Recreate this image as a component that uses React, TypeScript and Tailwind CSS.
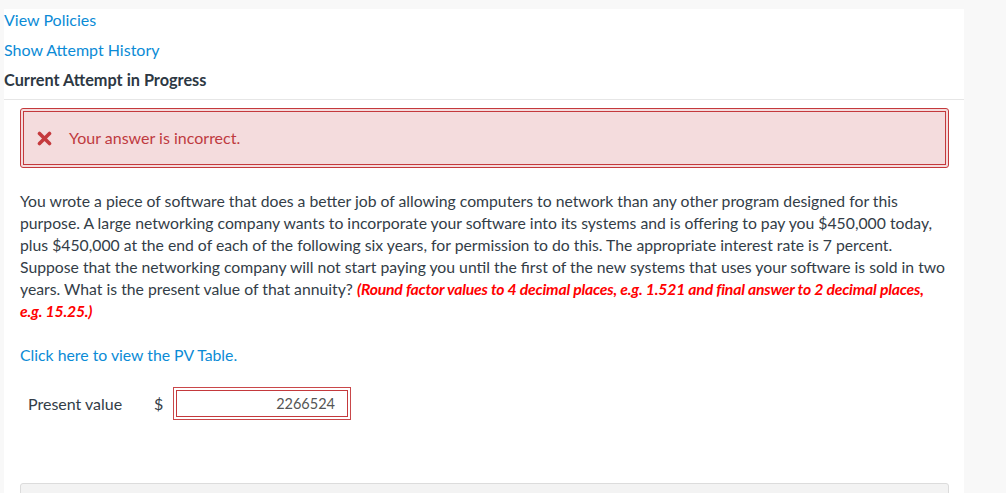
const font = { fontFamily: "Lato, 'Open Sans', sans-serif" };

function CrossIcon() {
  return (
    <svg width="15" height="15" viewBox="0 0 15 15" className="shrink-0">
      <path d="M2.5 2.5 L12.5 12.5 M12.5 2.5 L2.5 12.5" stroke="#c53a3d" strokeWidth="3.6" strokeLinecap="round" />
    </svg>
  );
}

export default function App() {
  return (
    <div className="min-h-screen bg-[#f8f8f8] pt-[9px] pl-[4px]" style={font}>
      <div className="w-[960px] min-h-[484px] bg-white">
        {/* Header links */}
        <div className="flex flex-col gap-[8px] pb-[8px] text-[16px] leading-[22px]">
          <a className="text-[#0b8bd6]">View Policies</a>
          <a className="text-[#0b8bd6]">Show Attempt History</a>
          <div className="text-[16.3px] font-bold text-[#2d3843]">Current Attempt in Progress</div>
        </div>

        <div className="border-t border-[#e6e6e6] px-4 pt-[8px]">
          {/* Feedback box */}
          <div className="w-[929px] rounded-[3px] border border-[#c4393c] bg-[#f4dcdd] p-[2px]">
            <div className="flex h-[54px] items-center gap-[17px] border border-[#c4393c] pl-[13px] text-[16px] text-[#bf3a40]">
              <CrossIcon />
              <span>Your answer is incorrect.</span>
            </div>
          </div>

          {/* Question */}
          <p className="mt-[22px] w-[928px] text-[15.75px] leading-[22px] text-[#333d47]">
            You wrote a piece of software that does a better job of allowing computers to network than any other program designed for this purpose. A large networking company wants to incorporate your software into its systems and is offering to pay you $450,000 today, plus $450,000 at the end of each of the following six years, for permission to do this. The appropriate interest rate is 7 percent. Suppose that the networking company will not start paying you until the first of the new systems that uses your software is sold in two years. What is the present value of that annuity?{" "}
            <span className="font-bold italic tracking-[-0.2px] text-[#ff0000]">
              (Round factor values to 4 decimal places, e.g. 1.521 and final answer to 2 decimal places, e.g. 15.25.)
            </span>
          </p>

          <a className="mt-[22px] block text-[15.8px] leading-[22px] text-[#0b8bd6]">Click here to view the PV Table.</a>

          {/* Answer row */}
          <div className="mt-[21px] flex items-center pl-[8px] text-[16px] text-[#333d47]">
            <span className="w-[126px]">Present value</span>
            <span className="w-[19px]">$</span>
            <div className="border border-[#c9474a] p-[2px]">
              <div className="flex h-[27px] w-[172px] items-center justify-end border border-[#c4393c] pr-[12px] text-[14.5px] text-[#555]">
                2266524
              </div>
            </div>
          </div>

          {/* Next panel */}
          <div className="mt-[63px] h-[20px] w-[929px] rounded-t-[3px] border border-[#dcdcdc] bg-[#f3f3f3]" />
        </div>
      </div>
    </div>
  );
}
